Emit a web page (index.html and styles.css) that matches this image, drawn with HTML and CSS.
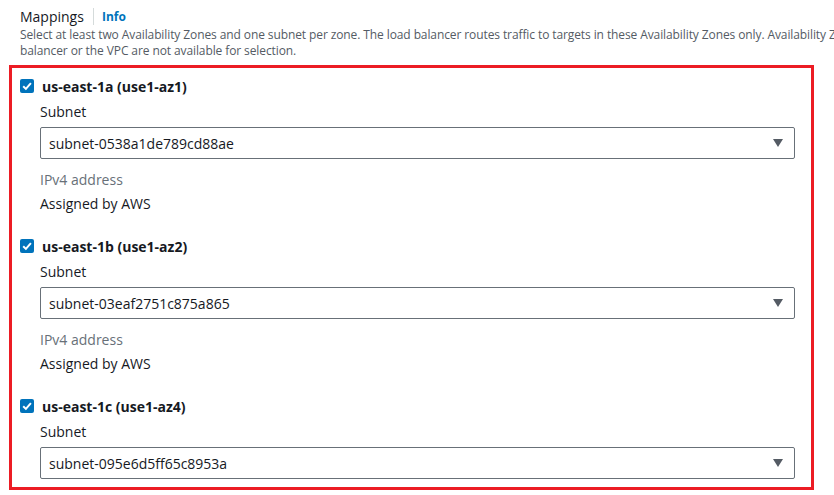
FILE: index.html
```html
<!DOCTYPE html>
<html>
<head>
<meta charset="utf-8">
<link rel="stylesheet" href="styles.css">
</head>
<body>
<div class="header">
  <div class="title-row">
    <span class="title">Mappings</span>
    <span class="divider"></span>
    <span class="info">Info</span>
  </div>
  <div class="desc">Select at least two Availability Zones and one subnet per zone. The load balancer routes traffic to targets in these Availability Zones only. Availability Zones that are not supported by the load<br>balancer or the VPC are not available for selection.</div>
</div>
<div class="box">
  <div class="zone">
    <div class="zone-head">
      <span class="cb"><svg width="14" height="14" viewBox="0 0 14 14"><path d="M3.2 7.2 L5.9 9.9 L10.9 4.2" fill="none" stroke="#fff" stroke-width="2"/></svg></span>
      <span class="zone-name">us-east-1a (use1-az1)</span>
    </div>
    <div class="field">
      <div class="label">Subnet</div>
      <div class="select"><span>subnet-0538a1de789cd88ae</span><span class="caret"></span></div>
      <div class="label muted ipv4">IPv4 address</div>
      <div class="value">Assigned by AWS</div>
    </div>
  </div>
  <div class="zone">
    <div class="zone-head">
      <span class="cb"><svg width="14" height="14" viewBox="0 0 14 14"><path d="M3.2 7.2 L5.9 9.9 L10.9 4.2" fill="none" stroke="#fff" stroke-width="2"/></svg></span>
      <span class="zone-name">us-east-1b (use1-az2)</span>
    </div>
    <div class="field">
      <div class="label">Subnet</div>
      <div class="select"><span>subnet-03eaf2751c875a865</span><span class="caret"></span></div>
      <div class="label muted ipv4">IPv4 address</div>
      <div class="value">Assigned by AWS</div>
    </div>
  </div>
  <div class="zone">
    <div class="zone-head">
      <span class="cb"><svg width="14" height="14" viewBox="0 0 14 14"><path d="M3.2 7.2 L5.9 9.9 L10.9 4.2" fill="none" stroke="#fff" stroke-width="2"/></svg></span>
      <span class="zone-name">us-east-1c (use1-az4)</span>
    </div>
    <div class="field">
      <div class="label">Subnet</div>
      <div class="select"><span>subnet-095e6d5ff65c8953a</span><span class="caret"></span></div>
    </div>
  </div>
</div>
</body>
</html>
```
FILE: styles.css
```css
html, body {
  margin: 0;
  padding: 0;
  background: #fff;
  overflow: hidden;
}
body {
  font-family: "Open Sans", "Liberation Sans", Arial, sans-serif;
  color: #16191f;
  width: 834px;
  height: 495px;
}
.header {
  padding: 5px 0 0 20px;
  height: 65px;
  box-sizing: border-box;
}
.title-row {
  display: flex;
  align-items: center;
  height: 22px;
}
.title {
  font-size: 14px;
  color: #16191f;
}
.divider {
  width: 1px;
  height: 17px;
  background: #d5dbdb;
  margin: 0 8px 0 9px;
}
.info {
  font-size: 12px;
  font-weight: 700;
  color: #0073bb;
}
.desc {
  font-size: 12px;
  line-height: 16px;
  color: #545b64;
  white-space: nowrap;
  letter-spacing: -0.1px;
}
.box {
  margin: 0 0 0 9px;
  width: 805px;
  height: 425px;
  border: 3px solid #ec1c24;
  box-sizing: border-box;
  padding: 8px 16px 0 8px;
}
.zone {
  margin-bottom: 22px;
}
.zone-head {
  display: flex;
  align-items: center;
  height: 20px;
}
.cb {
  width: 14px;
  height: 14px;
  background: #0073bb;
  border-radius: 2px;
  display: inline-flex;
  margin-right: 8px;
}
.cb svg { display: block; }
.zone-name {
  font-size: 14px;
  font-weight: 700;
}
.field {
  padding-left: 20px;
}
.label {
  font-size: 14px;
  line-height: 20px;
  margin-top: 6px;
}
.muted { color: #687078; }
.ipv4 { margin-top: 11px; }
.value {
  font-size: 14px;
  line-height: 20px;
  margin-top: 4px;
}
.select {
  margin-top: 5px;
  height: 32px;
  border: 1px solid #687078;
  border-radius: 2px;
  box-sizing: border-box;
  display: flex;
  align-items: center;
  justify-content: space-between;
  padding: 0 11px 0 8px;
  font-size: 14px;
}
.caret {
  width: 0;
  height: 0;
  border-left: 5px solid transparent;
  border-right: 5px solid transparent;
  border-top: 8px solid #545b64;
}
```
